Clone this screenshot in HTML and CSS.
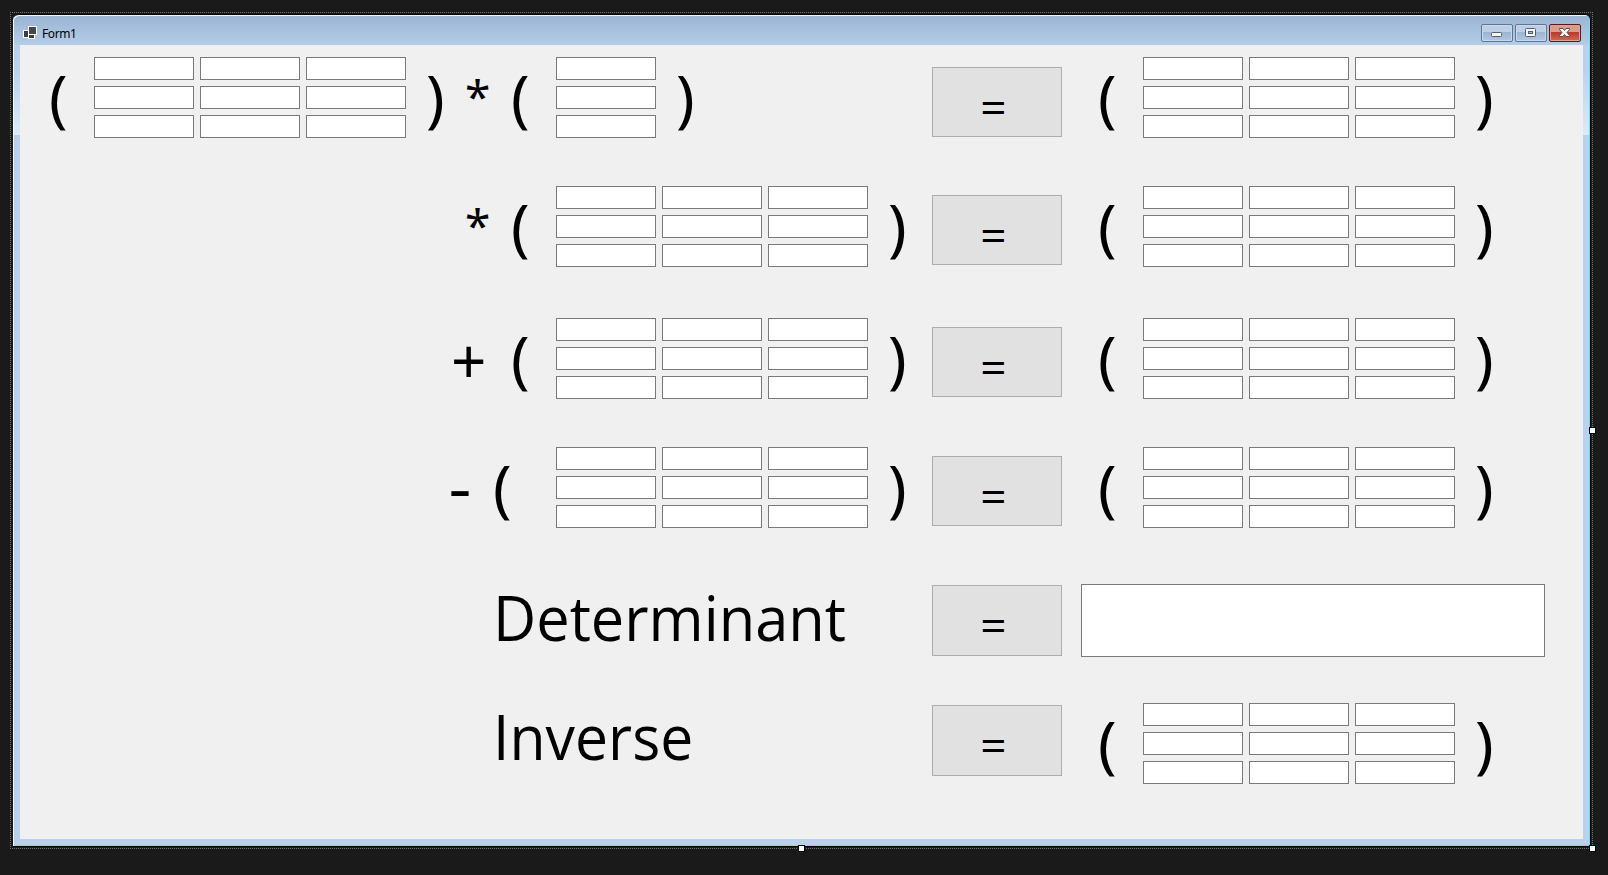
FILE: index.html
```html
<!DOCTYPE html>
<html lang="en">
<head>
<meta charset="utf-8">
<title>Form1</title>
<link rel="stylesheet" href="styles.css">
</head>
<body>
<div class="selection">
  <div class="window">
    <header class="titlebar">
      <svg class="app-icon" width="14" height="13" viewBox="0 0 14 13" shape-rendering="crispEdges">
        <rect x="0" y="4" width="6" height="8" fill="#fff"/><rect x="1" y="5" width="4" height="6" fill="#3b3f45"/>
        <rect x="5" y="8" width="7" height="5" fill="#fff"/><rect x="6" y="9" width="5" height="3" fill="#3b3f45"/>
        <rect x="5" y="0" width="9" height="9" fill="#fff"/><rect x="6" y="1" width="7" height="7" fill="#44474d"/>
      </svg>
      <span class="title">Form1</span>
      <div class="controls">
        <span class="control"><svg width="30" height="16" viewBox="0 0 30 16"><rect x="9.5" y="7.5" width="10" height="4" rx="1" fill="#f4f6f8" stroke="#555d6b"/></svg></span>
        <span class="control"><svg width="30" height="16" viewBox="0 0 30 16"><rect x="9.5" y="3.500" width="10" height="8" rx="1" fill="#f4f6f8" stroke="#555d6b"/><rect x="12.500" y="6.500" width="4" height="2" fill="#a9bdd6" stroke="#555d6b"/></svg></span>
        <span class="control close"><svg width="30" height="16" viewBox="0 0 30 16"><path d="M9.500 3.500h3.500l1.500 2 1.500-2h3.500v1L17 7.500l2.500 3v1H16l-1.500-2-1.500 2H9.500v-1l2.500-3-2.500-3z" fill="#f6f6f6" stroke="#5b4a52"/></svg></span>
      </div>
    </header>
    <main class="client">
      <section class="row">
        <span class="glyph lead">(</span>
        <div class="matrix"><i></i><i></i><i></i><i></i><i></i><i></i><i></i><i></i><i></i></div>
        <div class="operator"><span class="glyph close-a">)</span><span class="glyph times">*</span><span class="glyph open-b">(</span></div>
        <div class="vector"><div class="matrix single"><i></i><i></i><i></i></div><span class="glyph close-v">)</span></div>
        <span></span>
        <button class="equals first">=</button>
        <span class="glyph open-r">(</span>
        <div class="matrix"><i></i><i></i><i></i><i></i><i></i><i></i><i></i><i></i><i></i></div>
        <span class="glyph close-r">)</span>
      </section>
      <section class="row multiply">
        <span></span><span></span>
        <div class="operator"><span class="glyph close-a"></span><span class="glyph times">*</span><span class="glyph open-b">(</span></div>
        <div class="matrix"><i></i><i></i><i></i><i></i><i></i><i></i><i></i><i></i><i></i></div>
        <span class="glyph close-b">)</span>
        <button class="equals">=</button>
        <span class="glyph open-r">(</span>
        <div class="matrix"><i></i><i></i><i></i><i></i><i></i><i></i><i></i><i></i><i></i></div>
        <span class="glyph close-r">)</span>
      </section>
      <section class="row add">
        <span></span><span></span>
        <div class="operator"><span class="glyph plus">+</span><span class="glyph open-b">(</span></div>
        <div class="matrix"><i></i><i></i><i></i><i></i><i></i><i></i><i></i><i></i><i></i></div>
        <span class="glyph close-b">)</span>
        <button class="equals">=</button>
        <span class="glyph open-r">(</span>
        <div class="matrix"><i></i><i></i><i></i><i></i><i></i><i></i><i></i><i></i><i></i></div>
        <span class="glyph close-r">)</span>
      </section>
      <section class="row subtract">
        <span></span><span></span>
        <div class="operator"><span class="glyph minus">-</span><span class="glyph open-b">(</span></div>
        <div class="matrix"><i></i><i></i><i></i><i></i><i></i><i></i><i></i><i></i><i></i></div>
        <span class="glyph close-b">)</span>
        <button class="equals">=</button>
        <span class="glyph open-r">(</span>
        <div class="matrix"><i></i><i></i><i></i><i></i><i></i><i></i><i></i><i></i><i></i></div>
        <span class="glyph close-r">)</span>
      </section>
      <section class="row determinant">
        <span class="label"><span class="word det">Determinant</span></span>
        <button class="equals">=</button>
        <div class="result"></div>
      </section>
      <section class="row inverse">
        <span class="label"><span class="word inv">Inverse</span></span>
        <button class="equals">=</button>
        <span class="glyph open-r">(</span>
        <div class="matrix"><i></i><i></i><i></i><i></i><i></i><i></i><i></i><i></i><i></i></div>
        <span class="glyph close-r">)</span>
      </section>
    </main>
  </div>
  <b class="handle right"></b><b class="handle bottom"></b><b class="handle corner"></b>
</div>
</body>
</html>
```
FILE: styles.css
```css
* { box-sizing: border-box; }
body {
  margin: 0;
  height: 875px;
  padding: 12px 0 0 10px;
  background: #1a1a1a;
  overflow: hidden;
  font-family: "Noto Sans", "Open Sans", sans-serif;
  color: #000;
}
.selection {
  position: relative;
  width: 1583px;
  height: 837px;
  padding: 2px 2px 2px 3px;
  background:
    repeating-linear-gradient(90deg, #747474 0 1px, #1a1a1a 1px 2px) 0 0 / 100% 1px no-repeat,
    repeating-linear-gradient(90deg, #747474 0 1px, #1a1a1a 1px 2px) 0 100% / 100% 1px no-repeat,
    repeating-linear-gradient(#747474 0 1px, #1a1a1a 1px 2px) 0 0 / 1px 100% no-repeat,
    repeating-linear-gradient(#747474 0 1px, #1a1a1a 1px 2px) 100% 0 / 1px 100% no-repeat;
}
.window {
  width: 1578px;
  height: 833px;
  padding: 0 7px 0 6px;
  border: 1px solid #050607;
  border-left: 0;
  border-radius: 6px 6px 0 0;
  box-shadow: inset 1px 1px 0 #f2f7fb, inset -1px -1px 0 #6fdcf5;
  background:
    linear-gradient(#9ab4d1, #b3cde9) 0 0 / 100% 30px no-repeat,
    linear-gradient(#b9d1ea, #b9d1ea 25%, #deebf8) 0 30px / 100% 90px no-repeat,
    #b9d1ea;
}
.titlebar {
  display: flex;
  align-items: flex-start;
  height: 30px;
  padding: 9px 2px 0 4px;
}
.app-icon { margin-top: 2px; }
.title { margin: 1px 0 0 5px; font-size: 12px; line-height: 18px; letter-spacing: -0.4px; }
.controls { display: flex; gap: 2px; margin-left: auto; }
.control {
  width: 32px;
  height: 18px;
  border: 1px solid #5f7693;
  border-radius: 2px;
  box-shadow: inset 0 0 0 1px #c8d9eb;
  background: linear-gradient(#bccfe4 45%, #9bb4d0 45%, #b1c8e1);
}
.control svg { display: block; }
.control.close {
  border-color: #571a20;
  box-shadow: inset 0 0 0 1px #e0a295;
  background: linear-gradient(#dd9b8d 45%, #b83b29 45%, #cf6a55);
}
.client { width: 1563px; height: 794px; margin-left: 1px; padding-top: 12px; background: #f0f0f0; }
.row {
  display: grid;
  grid-template-columns: 74px 312px 150px 312px 64px 130px 81px 312px 1fr;
  align-items: start;
  height: 81px;
}
.multiply, .subtract { margin-top: 48px; }
.add { margin-top: 51px; }
.determinant { height: 73px; margin-top: 56px; }
.inverse { margin-top: 46px; }
.matrix { display: grid; grid-template-columns: repeat(3, 100px); gap: 6px; }
.matrix.single { grid-template-columns: 100px; }
.matrix i, .result { height: 23px; border: 1px solid #7a7a7a; background: #fff; }
.vector, .operator { display: flex; }
.glyph { display: block; width: 19px; font-size: 62px; line-height: 78px; white-space: nowrap; }
.lead { margin-left: 29px; }
.close-a { margin-left: 20px; }
.open-r { margin-left: 36px; }
.close-b { margin-left: 20px; }
.close-r { margin-left: 20px; }
.close-v { margin-left: 20px; }
.times { width: 24px; margin-left: 20px; font-size: 46px; line-height: 79px; }
.open-b { margin-left: 22px; }
.plus { width: 36px; margin-left: 45px; line-height: 85px; }
.plus + .open-b { margin-left: 24px; }
.minus { width: 20px; margin-left: 44px; transform: scaleX(1.15); }
.minus + .open-b { margin-left: 23px; }
.equals {
  width: 130px;
  height: 70px;
  margin: 9px 0 0;
  padding: 0 7px 2px 0;
  border: 1px solid #adadad;
  background: #e1e1e1;
  color: #000;
  font: 46px/76px "Open Sans", sans-serif;
}
.equals.first { margin-top: 10px; }
.determinant .equals { height: 71px; margin-top: 1px; }
.inverse .equals { height: 71px; margin-top: 2px; }
.label { grid-column: 1 / 6; padding-left: 473px; font: 63px/65px "Open Sans", sans-serif; }
.word { display: inline-block; transform-origin: 0 50%; transform: scaleX(0.945); }
.inv { transform: scaleX(0.935); }
.result { width: 464px; height: 73px; margin-left: 19px; }
.determinant .result { grid-column: 7 / 10; }
.handle { position: absolute; width: 7px; height: 7px; border: 1px solid #000; background: #fff; }
.right { left: 1579px; top: 415px; }
.bottom { left: 788px; top: 833px; }
.corner { left: 1579px; top: 833px; }
```
